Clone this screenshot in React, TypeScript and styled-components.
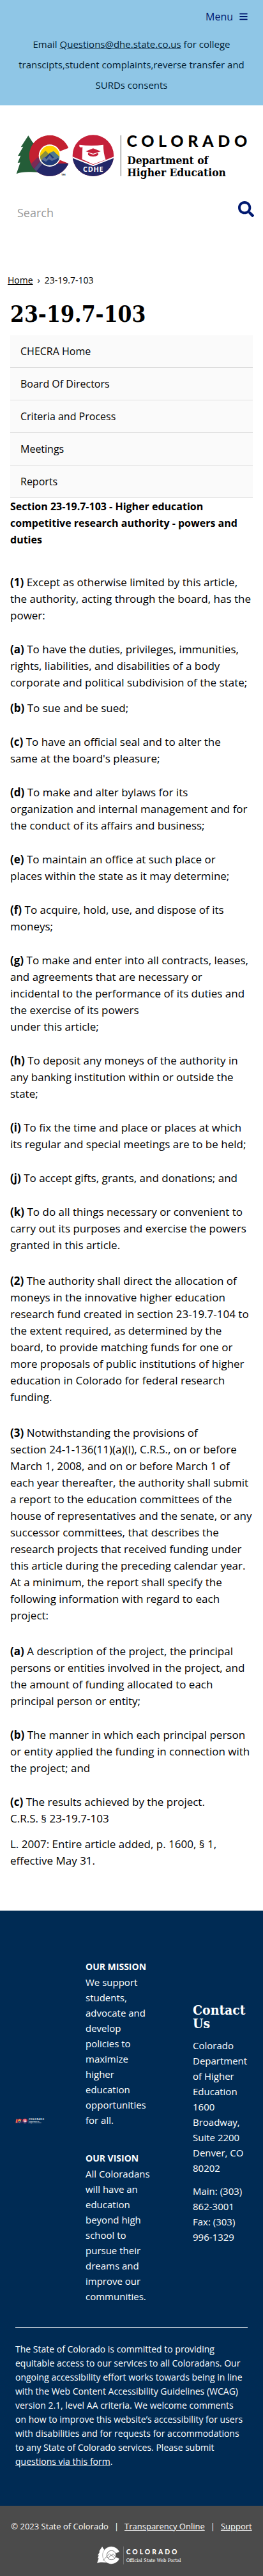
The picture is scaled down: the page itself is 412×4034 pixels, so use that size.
import React from "react";
import styled, { createGlobalStyle } from "styled-components";
import { FaBars, FaSearch } from "react-icons/fa";

const sans = `"Open Sans", "Trebuchet MS", sans-serif`;
const slab = `"DejaVu Serif Condensed", "DejaVu Serif", serif`;

const GlobalStyle = createGlobalStyle`
  *, *::before, *::after { box-sizing: border-box; }
  body {
    margin: 0;
    background: #fff;
    color: #000;
    font-family: ${sans};
    font-size: 17px;
    line-height: 26px;
  }
  h1, h2, h3, p, ul { margin: 0; padding: 0; }
`;

/* ---------- Banner ---------- */

const Banner = styled.div`
  padding: 12px 24px 16px;
  background: #8fc6e6;
  color: #001c33;
`;

const MenuButton = styled.button`
  display: flex;
  align-items: center;
  gap: 10px;
  margin: 0 0 0 auto;
  padding: 0;
  border: 0;
  background: none;
  color: #001970;
  font: 16px/28px ${sans};
  cursor: pointer;

  svg { width: 13px; height: 14px; }
`;

const Notice = styled.p`
  margin-top: 13px;
  font-size: 15px;
  line-height: 32px;
  text-align: center;

  a { color: inherit; }
`;

/* ---------- Header ---------- */

const Header = styled.header`
  padding: 43px 14px 0 24px;
`;

const LogoLink = styled.a`
  display: block;
  margin-right: 3px;
`;

const LogoSvg = styled.svg`
  display: block;
  width: 100%;
  height: auto;
  overflow: visible;
`;

const SearchForm = styled.form`
  display: flex;
  align-items: flex-start;
  margin-top: 33px;
`;

const SearchInput = styled.input`
  flex: 1;
  min-width: 0;
  height: 40px;
  padding: 0 3px;
  border: 0;
  background: none;
  font: 18px/40px ${sans};

  &::placeholder { color: #999; opacity: 1; }
`;

const SearchButton = styled.button`
  display: flex;
  padding: 2px 0;
  border: 0;
  background: none;
  color: #001970;
  cursor: pointer;

  svg { width: 25px; height: 25px; }
`;

/* ---------- Main ---------- */

const Breadcrumb = styled.nav`
  display: flex;
  gap: 7px;
  margin-top: 76px;
  padding: 0 12px;
  font-size: 14px;
  line-height: 20px;

  a { color: inherit; }
`;

const Main = styled.main`
  padding: 22px 16px 65px;
`;

const PageTitle = styled.h1`
  font: 700 35px/42px ${slab};
`;

const SubNav = styled.ul`
  margin-top: 12px;
  list-style: none;
`;

const SubNavItem = styled.li`
  border-bottom: 1px solid #ddd;
  background: #fafafa;
`;

const SubNavLink = styled.a`
  display: block;
  padding: 0 16px;
  color: inherit;
  font-size: 16px;
  line-height: 50px;
  text-decoration: none;
`;

const SectionTitle = styled.h2`
  padding-bottom: 14px;
  font-size: 16px;
  line-height: 26px;
`;

const gaps = { tight: 14, clause: 27, section: 30 };

const Clause = styled.p<{ $gap?: keyof typeof gaps }>`
  margin-top: ${({ $gap = "clause" }) => gaps[$gap]}px;
`;

/* ---------- Footer ---------- */

const SiteFooter = styled.footer`
  padding: 76px 24px 58px;
  background: #002b54;
  color: #fff;
`;

const FooterColumns = styled.div`
  display: grid;
  grid-template-columns: minmax(0, 46fr) minmax(0, 104fr) minmax(0, 86fr);
  column-gap: 64px;
  align-items: center;
  padding-bottom: 36px;
  border-bottom: 1px solid #fff;
  font-size: 15px;
  line-height: 24px;
`;

const FooterLogo = styled.div`
  padding-bottom: 32px;
`;

const Statement = styled.section`
  & + & { margin-top: 36px; }

  h3 { font-size: 14px; line-height: 24px; }
`;

const Contact = styled.address`
  padding-bottom: 24px;
  font-style: normal;

  p { margin-top: 12px; }
`;

const ContactTitle = styled.h2`
  font: 700 21px/21px ${slab};
`;

const Accessibility = styled.p`
  margin-top: 23px;
  font-size: 14px;
  line-height: 22px;

  a { color: inherit; }
`;

const LegalBar = styled.div`
  padding: 22px 16px 18px;
  background: #4b4b4b;
  color: #fff;
`;

const LegalLinks = styled.div`
  display: flex;
  justify-content: center;
  gap: 9px;
  font-size: 13px;
  line-height: 20px;
  white-space: nowrap;

  a { color: inherit; }
`;

const PortalLink = styled.a`
  display: block;
  width: 164px;
  margin: 21px auto 0;
  padding-left: 28px;
`;

/* ---------- Drawings ---------- */

const treePath =
  "M133 637 L98 691 L109 689 L84 733 L97 731 L83 765 L95 764 L77 817 C105 805 140 807 190 811 L190 700 L153 668 Z";
const ringPath =
  "M322 695 A96 96 0 1 0 322 768 L279 751 A49 49 0 1 1 279 712 Z";

function StateLogo({ inverse = false }: { inverse?: boolean }) {
  const ink = inverse ? "#fff" : "#000";
  const id = inverse ? "inverse" : "color";
  return (
    <LogoSvg viewBox="72 624 1114 216" role="img" aria-label="Colorado Department of Higher Education">
      <clipPath id={`seal-${id}`}><circle cx="438" cy="731" r="97" /></clipPath>
      <clipPath id={`ring-${id}`}><path d={ringPath} /></clipPath>
      <clipPath id={`sun-${id}`}><circle cx="234" cy="731" r="46" /></clipPath>
      <path d={treePath} fill={inverse ? "#e8695a" : "#245d38"} />
      <g clipPath={`url(#ring-${id})`}>
        <rect x="130" y="630" width="200" height="200" fill="#c3202f" />
        <path d="M130 800 L184 742 L204 768 H330 V835 H130 Z" fill="#232768" />
        <path d="M138 778 L178 738 L190 756 L158 796 Z" fill="#7b2a55" />
        <path d="M158 796 L190 756 L200 770 L170 806 Z" fill="#4c4a78" />
      </g>
      <circle cx="234" cy="731" r="52" fill="#fff" />
      <g clipPath={`url(#sun-${id})`}>
        <rect x="185" y="680" width="100" height="100" fill="#ffd100" />
        <path d="M180 742 L214 708 L232 726 L252 710 L290 746 V790 H180 Z" fill="#8c8f3a" />
        <path d="M214 744 L234 718 L252 710 L290 746 V770 Z" fill="#4d7a8c" />
        <path d="M180 768 L212 740 L234 721 L262 748 L272 742 L290 758 V790 H180 Z" fill="#1f3a7a" />
        <path d="M196 750 L208 736 L218 748 L234 728 L246 745 L258 738 L268 746 L244 756 L230 748 L216 760 Z" fill="#5b7099" />
      </g>
      <text x="288" y="825" fill={ink} fontFamily="Lato, sans-serif" fontSize="13" fontWeight="700">TM</text>
      <g clipPath={`url(#seal-${id})`}>
        <rect x="340" y="630" width="200" height="200" fill="#c5203a" />
        <path d="M340 739 L438 778 L537 739 V830 H340 Z" fill="#232768" />
        <path d="M340 739 L438 778 L537 739" fill="none" stroke="#fff" strokeWidth="6" />
        <path d="M374 680 Q370 690 378 692 Q386 694 388 690 L386 748 L438 772 L497 750 Q486 720 486 680 Q430 688 374 680 Z" fill="#fff" />
        <path d="M403 711 L438 697 L474 711 L438 722 Z" fill="#c5203a" />
        <path d="M414 718 L438 727 L462 718 V728 Q438 744 414 728 Z" fill="#c5203a" />
        <text x="439" y="808" fill="#fff" textAnchor="middle" fontFamily="Open Sans, sans-serif" fontSize="33" fontWeight="700" letterSpacing="2">CDHE</text>
      </g>
      <rect x="567" y="636" width="3" height="192" fill={inverse ? "#fff" : "#555"} />
      <text x="596" y="689" fill={ink} fontFamily="Lato, sans-serif" fontSize="75" fontWeight="900" letterSpacing="20">COLORADO</text>
      <g fill={ink} fontFamily="DejaVu Serif Condensed, DejaVu Serif, serif" fontSize="52" fontWeight="700">
        <text x="598" y="771">Department of</text>
        <text x="598" y="828">Higher Education</text>
      </g>
    </LogoSvg>
  );
}

function PortalLogo() {
  return (
    <LogoSvg viewBox="458 1160 408 87" role="img" aria-label="Colorado Official State Web Portal">
      <g transform="translate(425 889) scale(0.43)">
        <path d={treePath} fill="#fff" />
        <path d={ringPath} fill="#fff" stroke="#4b4b4b" strokeWidth="3" />
        <circle cx="234" cy="731" r="50" fill="#fff" stroke="#4b4b4b" strokeWidth="5" />
        <path d="M142 790 L212 714 L234 738 L252 716 L282 748 M196 764 L234 728 L270 764" fill="none" stroke="#4b4b4b" strokeWidth="5" />
      </g>
      <rect x="582" y="1162" width="2" height="84" fill="#888" />
      <text x="595" y="1198" fill="#fff" fontFamily="Lato, sans-serif" fontSize="31" fontWeight="900" letterSpacing="9">COLORADO</text>
      <text x="595" y="1234" fill="#fff" fontFamily="DejaVu Serif Condensed, DejaVu Serif, serif" fontSize="23">Official State Web Portal</text>
    </LogoSvg>
  );
}

const subNav = ["CHECRA Home", "Board Of Directors", "Criteria and Process", "Meetings", "Reports"];

interface ClauseData {
  mark: string;
  text: React.ReactNode;
  gap?: keyof typeof gaps;
}

const clauses: ClauseData[] = [
  { mark: "(1)", text: "Except as otherwise limited by this article, the authority, acting through the board, has the power:" },
  { mark: "(a)", text: "To have the duties, privileges, immunities, rights, liabilities, and disabilities of a body corporate and political subdivision of the state;" },
  { mark: "(b)", text: "To sue and be sued;", gap: "tight" },
  { mark: "(c)", text: "To have an official seal and to alter the same\u00a0at the board's pleasure;" },
  { mark: "(d)", text: "To make and alter bylaws for its organization and internal management and for the conduct of its affairs and business;" },
  { mark: "(e)", text: "To maintain an office at such place or places\u00a0within the state as it may determine;" },
  { mark: "(f)", text: "To acquire, hold, use, and dispose of its moneys;" },
  { mark: "(g)", text: <>To make and enter into all contracts, leases, and agreements that are necessary or incidental to the performance of its duties and the exercise of its powers<br />under this article;</> },
  { mark: "(h)", text: "To deposit any moneys of the authority in any banking institution within or outside the state;" },
  { mark: "(i)", text: "To fix the time and place or places at which its regular and special meetings are to be held;" },
  { mark: "(j)", text: "To accept gifts, grants, and donations; and" },
  { mark: "(k)", text: "To do all things necessary or convenient to carry out its purposes and exercise the powers granted in this article." },
  { mark: "(2)", gap: "section", text: "The authority shall direct the allocation of moneys in the innovative higher education research fund created in section 23-19.7-104 to the extent required, as determined by the board, to provide matching funds for one or more proposals of public institutions of higher education in Colorado for federal research funding." },
  { mark: "(3)", gap: "section", text: "Notwithstanding the provisions of section\u00a024-1-136(11)(a)(I), C.R.S., on or before March 1, 2008, and on or before March 1 of each year thereafter, the authority shall submit a report to the education committees of the house of representatives and the senate, or any successor committees, that describes the research projects that received funding under this article during the preceding calendar year. At a minimum, the report shall specify the following information with regard to each project:" },
  { mark: "(a)", gap: "section", text: "A description of the project, the principal persons or entities involved in the project, and the amount of funding allocated to each principal person or entity;" },
  { mark: "(b)", text: "The manner in which each principal person or entity applied the funding in connection with the project; and" },
  { mark: "(c)", text: <>The results achieved by the project.<br />C.R.S. § 23-19.7-103</> },
];

export default function App() {
  return (
    <>
      <GlobalStyle />
      <Banner>
        <MenuButton type="button">Menu <FaBars aria-hidden /></MenuButton>
        <Notice>
          Email <a href="mailto:Questions@dhe.state.co.us">Questions@dhe.state.co.us</a> for college
          transcipts,student complaints,reverse transfer and SURDs consents
        </Notice>
      </Banner>

      <Header>
        <LogoLink href="#"><StateLogo /></LogoLink>
        <SearchForm role="search">
          <SearchInput type="search" aria-label="Search" placeholder="Search" />
          <SearchButton type="submit" aria-label="Submit search"><FaSearch aria-hidden /></SearchButton>
        </SearchForm>
      </Header>

      <Breadcrumb aria-label="Breadcrumb">
        <a href="#">Home</a><span aria-hidden>›</span><span>23-19.7-103</span>
      </Breadcrumb>

      <Main>
        <PageTitle>23-19.7-103</PageTitle>
        <SubNav>
          {subNav.map((label) => (
            <SubNavItem key={label}><SubNavLink href="#">{label}</SubNavLink></SubNavItem>
          ))}
        </SubNav>
        <SectionTitle>
          Section 23-19.7-103 - Higher education competitive research authority - powers and duties
        </SectionTitle>
        {clauses.map(({ mark, text, gap }, i) => (
          <Clause key={i} $gap={gap}><b>{mark}</b> {text}</Clause>
        ))}
        <Clause $gap="tight">L. 2007: Entire article added, p. 1600, § 1, effective May 31.</Clause>
      </Main>

      <SiteFooter>
        <FooterColumns>
          <FooterLogo><StateLogo inverse /></FooterLogo>
          <div>
            <Statement>
              <h3>OUR MISSION</h3>
              <p>We support students, advocate and develop policies to maximize higher education opportunities for all.</p>
            </Statement>
            <Statement>
              <h3>OUR VISION</h3>
              <p>All Coloradans will have an education beyond high school to pursue their dreams and improve our communities.</p>
            </Statement>
          </div>
          <Contact>
            <ContactTitle>Contact Us</ContactTitle>
            <p>Colorado Department of Higher Education<br />1600 Broadway, Suite 2200<br />Denver, CO 80202</p>
            <p>Main: (303) 862-3001<br />Fax: (303) 996-1329</p>
          </Contact>
        </FooterColumns>
        <Accessibility>
          The State of Colorado is committed to providing equitable access to our services to all
          Coloradans. Our ongoing accessibility effort works towards being in line with the Web Content
          Accessibility Guidelines (WCAG) version 2.1, level AA criteria. We welcome comments
          on&nbsp;how to improve this website’s accessibility for users with disabilities and for
          requests for accommodations to&nbsp;any State of Colorado services. Please submit{" "}
          <a href="#">questions via this form</a>.
        </Accessibility>
      </SiteFooter>

      <LegalBar>
        <LegalLinks>
          <span>© 2023 State of Colorado</span><span>|</span>
          <a href="#">Transparency Online</a><span>|</span>
          <a href="#">Support</a>
        </LegalLinks>
        <PortalLink href="#"><PortalLogo /></PortalLink>
      </LegalBar>
    </>
  );
}
